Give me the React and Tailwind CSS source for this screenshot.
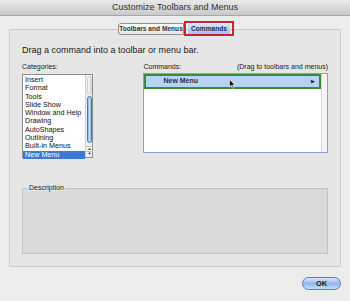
const categories = [
  'Insert',
  'Format',
  'Tools',
  'Slide Show',
  'Window and Help',
  'Drawing',
  'AutoShapes',
  'Outlining',
  'Built-in Menus',
  'New Menu',
];

const Cursor = () => (
  <svg width="7" height="10" viewBox="0 0 7 10" className="absolute left-[83px] top-[3px]">
    <path d="M0.5 0.5 L0.5 8 L2.3 6.3 L3.6 9.3 L4.8 8.8 L3.5 5.9 L6 5.9 Z" fill="#111" stroke="#fff" strokeWidth="0.6" />
  </svg>
);

export default function App() {
  return (
    <div className="w-[350px] h-[301px] bg-[#ececec] flex flex-col font-['Liberation_Sans',Arial,sans-serif] text-[#1a1a1a] overflow-hidden">
      {/* title bar */}
      <div className="h-[16px] shrink-0 bg-gradient-to-b from-[#e9e9e9] to-[#c9c9c9] border-b border-[#a8a8a8] flex items-center justify-center text-[9px] text-[#333]">
        Customize Toolbars and Menus
      </div>

      <div className="px-[9px] flex flex-col">
        {/* tabs */}
        <div className="mt-[7px] h-[12px] flex justify-center relative z-10 pl-[2px]">
          <div className="h-[12px] w-[66px] flex items-center justify-center bg-gradient-to-b from-[#ffffff] to-[#e6e6e6] border border-[#8f8f8f] rounded-l-[3px] text-[6.6px] font-bold text-[#333]">
            Toolbars and Menus
          </div>
          <div className="h-[15px] w-[50px] -mt-[2px] px-[2px] flex items-center border-2 border-[#cc2233]">
            <div className="h-[10px] flex-1 flex items-center justify-center bg-gradient-to-b from-[#cfe3fb] to-[#9cc3f0] text-[6.6px] font-bold text-[#1b2c55]">
              Commands
            </div>
          </div>
        </div>

        {/* group box */}
        <div className="-mt-[6px] h-[238px] border border-[#c9c9c9] rounded-[2px] bg-[#e6e6e6] px-[12px] pt-[15px] flex flex-col">
          <div className="text-[9px] leading-[10px] text-[#222]">Drag a command into a toolbar or menu bar.</div>

          <div className="mt-[8px] flex gap-[50px]">
            {/* categories */}
            <div className="flex flex-col w-[72px]">
              <div className="text-[7px] leading-[8px] h-[10px]">Categories:</div>
              <div className="mt-[1px] h-[84px] border border-[#8d8d8d] bg-white flex">
                <div className="flex-1 flex flex-col pt-[1px]">
                  {categories.map((c) => (
                    <div
                      key={c}
                      className={
                        c === 'New Menu'
                          ? 'h-[8.3px] leading-[8.3px] text-[7.2px] pl-[2px] bg-[#3c79d8] text-white'
                          : 'h-[8.3px] leading-[8.3px] text-[7.2px] pl-[2px] text-[#111]'
                      }
                    >
                      {c}
                    </div>
                  ))}
                </div>
                <div className="w-[7px] border-l border-[#cfcfcf] bg-[#f0f0f0] flex flex-col items-center">
                  <div className="mt-[1px] w-[5px] h-[18px] rounded-t-[3px] bg-gradient-to-r from-[#f6f6f6] to-[#dedede] border border-[#d0d0d0]" />
                  <div className="mt-[2px] w-[5px] h-[47px] rounded-[3px] bg-gradient-to-r from-[#8fb4ea] via-[#c4dafa] to-[#8fb4ea] border border-[#4c72b8]" />
                  <div className="mt-[3px] w-[7px] h-[5px] border-t border-[#c5c5c5] flex items-center justify-center text-[4px] leading-[4px] text-[#333]">▲</div>
                  <div className="w-[7px] h-[5px] border-t border-[#c5c5c5] flex items-center justify-center text-[4px] leading-[4px] text-[#333]">▼</div>
                </div>
              </div>
            </div>

            {/* commands */}
            <div className="flex flex-col w-[186px]">
              <div className="h-[10px] flex justify-between text-[7px] leading-[8px]">
                <span>Commands:</span>
                <span>(Drag to toolbars and menus)</span>
              </div>
              <div className="h-[80px] border border-[#8a9fd4] bg-white flex relative">
                <div className="flex-1 flex flex-col">
                  <div className="h-[15px] border-2 border-[#3c8a37] bg-[#b6d3f6] flex items-center pl-[17px] pr-[4px] relative">
                    <span className="text-[7px] font-bold text-[#1d2c55]">New Menu</span>
                    <span className="ml-auto text-[5px] leading-[5px] text-[#222]">▶</span>
                    <Cursor />
                  </div>
                </div>
                <div className="w-[6px] border-l border-[#d8d8d8] bg-[#f4f4f4]" />
              </div>
            </div>
          </div>

          {/* description */}
          <div className="mt-[26px] flex flex-col">
            <div className="pl-[6px] text-[7px] leading-[8px] h-[8px] -mb-[4px] relative">
              <span className="bg-[#e6e6e6] px-[1px]">Description</span>
            </div>
            <div className="h-[66px] border border-[#c3c3c3] bg-[#dadada]" />
          </div>
        </div>

        {/* ok button */}
        <div className="mt-[10px] flex justify-end">
          <div className="w-[39px] h-[13px] rounded-full border border-[#5a7db6] bg-gradient-to-b from-[#d9e8fb] via-[#90b8ee] to-[#c3dcfa] flex items-center justify-center text-[7.5px] font-bold text-[#1a1a1a]">
            OK
          </div>
        </div>
      </div>
    </div>
  );
}
